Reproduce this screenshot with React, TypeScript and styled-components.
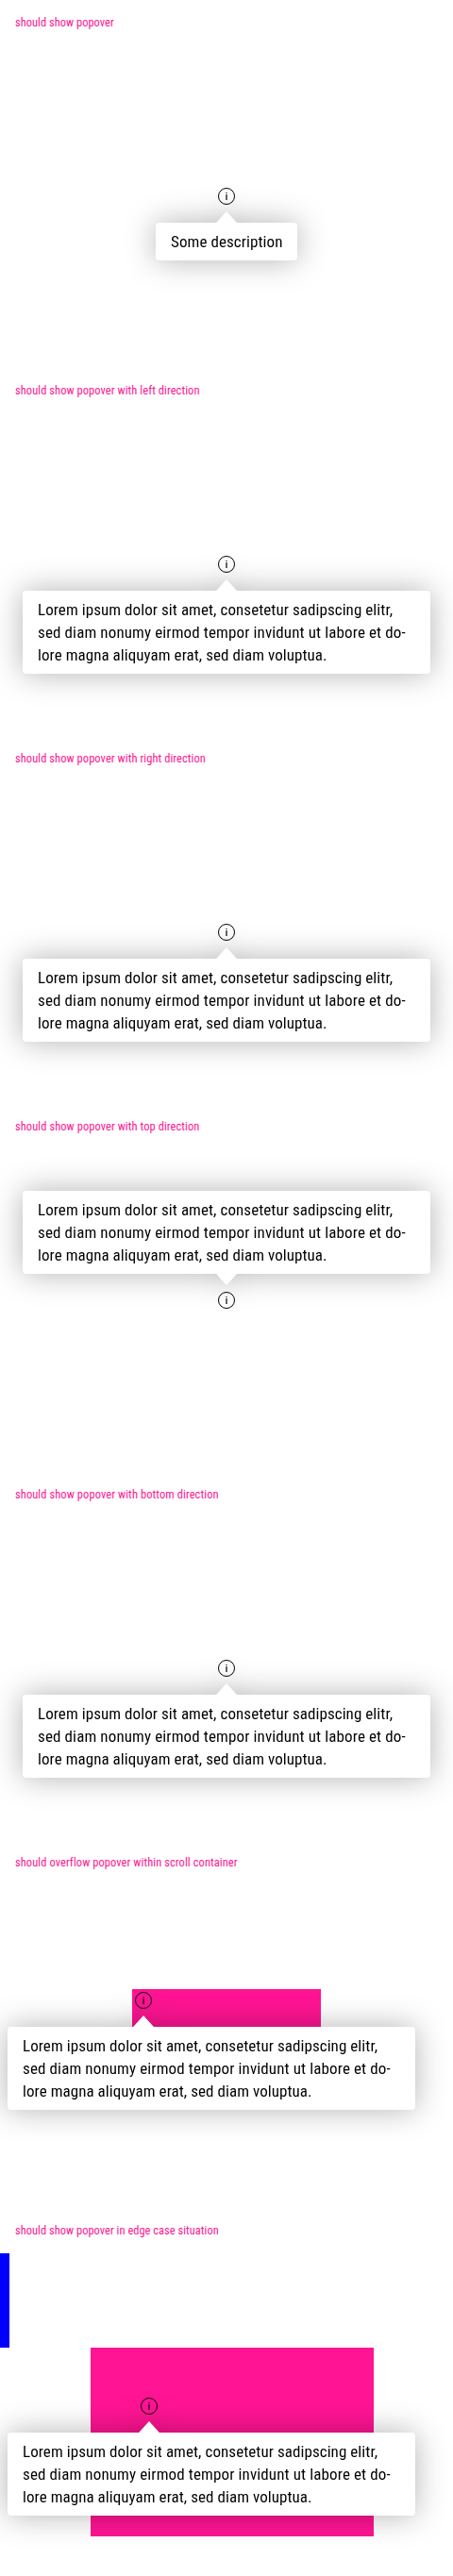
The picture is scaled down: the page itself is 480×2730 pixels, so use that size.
import React from 'react';
import styled, { createGlobalStyle, css } from 'styled-components';

const GlobalStyle = createGlobalStyle`
  body {
    margin: 0;
    background: #fff;
    color: #010205;
    font-family: 'Roboto Condensed', Roboto, 'Liberation Sans', sans-serif;
    font-stretch: 75%;
  }
`;

const Page = styled.main`
  width: 480px;
  overflow: hidden;
`;

const Section = styled.section`
  box-sizing: border-box;
  height: 390px;
`;

const Title = styled.h2<{ $spacing: number }>`
  box-sizing: border-box;
  height: 48px;
  margin: 0;
  padding: 0 16px;
  font-size: 12.5px;
  font-weight: 400;
  line-height: 47px;
  letter-spacing: ${(p) => p.$spacing}px;
  white-space: nowrap;
  color: deeppink;
`;

const Stage = styled.div`
  display: flex;
  align-items: center;
  justify-content: center;
  height: 320px;
`;

const ScrollArea = styled.div`
  width: 200px;
  height: 100px;
  background: deeppink;
`;

const EdgeStage = styled.div`
  display: flex;
  flex-direction: column;
  height: 320px;
`;

const BlueBlock = styled.div`
  width: 10px;
  height: 100px;
  background: blue;
`;

const EdgeArea = styled.div`
  box-sizing: border-box;
  width: 300px;
  height: 200px;
  margin-left: 96px;
  padding: 50px;
  background: deeppink;
`;

const Trigger = styled.div`
  position: relative;
  width: 24px;
  height: 24px;
`;

const Icon = styled.svg`
  display: block;
  width: 24px;
  height: 24px;
`;

type Side = 'top' | 'bottom';

const Overlay = styled.div<{ $side: Side }>`
  position: absolute;
  left: 50%;
  z-index: 1;
  width: 0;
  filter: drop-shadow(0 0 16px rgba(0, 0, 0, 0.3));
  ${(p) => (p.$side === 'top' ? css`bottom: 28px;` : css`top: 28px;`)}
  display: flex;
  flex-direction: ${(p) => (p.$side === 'top' ? 'column-reverse' : 'column')};
`;

const Arrow = styled.div<{ $side: Side }>`
  width: 24px;
  height: 12px;
  margin-left: -12px;
  background: #fff;
  clip-path: ${(p) =>
    p.$side === 'top'
      ? 'polygon(50% 100%, 100% -10%, 0 -10%)'
      : 'polygon(50% 0, 100% 110%, 0 110%)'};
`;

const Bubble = styled.div<{ $width: number; $shift: number }>`
  box-sizing: border-box;
  width: ${(p) => p.$width}px;
  margin-left: ${(p) => p.$shift}px;
  padding: 8px 16px;
  border-radius: 4px;
  background: #fff;
`;

const Line = styled.span<{ $spacing: number }>`
  display: block;
  font-size: 17px;
  line-height: 24px;
  letter-spacing: ${(p) => p.$spacing}px;
  white-space: nowrap;
`;

type TextLine = { text: string; spacing: number };

const short: TextLine[] = [{ text: 'Some description', spacing: 0.08 }];
const lorem: TextLine[] = [
  { text: 'Lorem ipsum dolor sit amet, consetetur sadipscing elitr,', spacing: 0.07 },
  { text: 'sed diam nonumy eirmod tempor invidunt ut labore et do-', spacing: 0.125 },
  { text: 'lore magna aliquyam erat, sed diam voluptua.', spacing: 0.06 },
];

type PopoverProps = { lines: TextLine[]; side?: Side; width?: number; shift?: number };

const Popover = ({ lines, side = 'bottom', width = 432, shift = -216 }: PopoverProps) => (
  <Trigger>
    <Icon viewBox="0 0 24 24" fill="none">
      <circle cx="12" cy="12" r="8.5" stroke="#010205" />
      <path d="M11 8h2v1h-2zM11 10h2v6h-2z" fill="#010205" fillOpacity="0.6" />
    </Icon>
    <Overlay $side={side}>
      <Arrow $side={side} />
      <Bubble $width={width} $shift={shift}>
        {lines.map((line) => (
          <Line key={line.text} $spacing={line.spacing}>
            {line.text}
          </Line>
        ))}
      </Bubble>
    </Overlay>
  </Trigger>
);

export default function App() {
  return (
    <>
      <GlobalStyle />
      <Page>
        <Section>
          <Title $spacing={0}>should show popover</Title>
          <Stage>
            <Popover lines={short} width={150} shift={-75} />
          </Stage>
        </Section>
        <Section>
          <Title $spacing={0.045}>should show popover with left direction</Title>
          <Stage>
            <Popover lines={lorem} />
          </Stage>
        </Section>
        <Section>
          <Title $spacing={0.05}>should show popover with right direction</Title>
          <Stage>
            <Popover lines={lorem} />
          </Stage>
        </Section>
        <Section>
          <Title $spacing={0.055}>should show popover with top direction</Title>
          <Stage>
            <Popover lines={lorem} side="top" />
          </Stage>
        </Section>
        <Section>
          <Title $spacing={0.07}>should show popover with bottom direction</Title>
          <Stage>
            <Popover lines={lorem} />
          </Stage>
        </Section>
        <Section>
          <Title $spacing={0.06}>should overflow popover within scroll container</Title>
          <Stage>
            <ScrollArea>
              <Popover lines={lorem} shift={-144} />
            </ScrollArea>
          </Stage>
        </Section>
        <Section>
          <Title $spacing={0}>should show popover in edge case situation</Title>
          <EdgeStage>
            <BlueBlock />
            <EdgeArea>
              <Popover lines={lorem} shift={-150} />
            </EdgeArea>
          </EdgeStage>
        </Section>
      </Page>
    </>
  );
}
